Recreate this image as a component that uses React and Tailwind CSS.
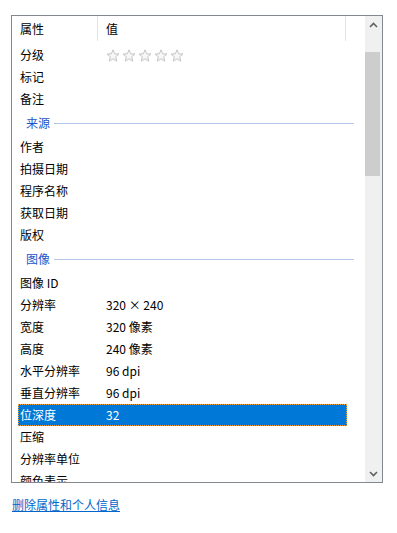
import React from 'react';

const font = { fontFamily: '"Noto Sans CJK SC", "Noto Sans", sans-serif' };

const Star = () => (
  <svg width="14" height="13" viewBox="0 0 14 13">
    <polygon
      points="7,0.8 8.7,4.8 13,5 9.6,7.8 10.8,12.2 7,9.8 3.2,12.2 4.4,7.8 1,5 5.3,4.8"
      fill="#f7f7f7"
      stroke="#c4c4c4"
      strokeWidth="1"
      strokeLinejoin="round"
    />
  </svg>
);

const Row = ({ name, value, selected, children }) => (
  <div className="h-[22px] pl-[6px] flex">
    <div
      className={
        selected
          ? 'w-[329px] flex items-center bg-[#0078d7] text-white border border-dotted border-[#f0a040]'
          : 'w-[329px] flex items-center border border-transparent'
      }
    >
      <div className="w-[79px] pl-[1px] shrink-0">{name}</div>
      <div className="pl-[8px] flex items-center gap-[2px]">{children || value}</div>
    </div>
  </div>
);

const Group = ({ title }) => (
  <div className="h-[26px] flex items-center pl-[14px] pr-[11px]">
    <span className="text-[#1d55c9]">{title}</span>
    <div className="flex-1 h-px bg-[#b4c6e6] ml-[4px]" />
  </div>
);

const Chevron = ({ down }) => (
  <svg width="9" height="6" viewBox="0 0 9 6">
    <polyline
      points={down ? '1,1 4.5,4.5 8,1' : '1,5 4.5,1.5 8,5'}
      fill="none"
      stroke="#606060"
      strokeWidth="1.6"
    />
  </svg>
);

export default function App() {
  return (
    <div className="w-[397px] h-[533px] bg-white text-[12px] text-black leading-none" style={font}>
      <div className="pt-[15px] pl-[11px]">
        <div className="w-[372px] h-[468px] border border-[#828790] flex overflow-hidden">
          <div className="flex-1 overflow-hidden">
            {/* header */}
            <div className="h-[28px] flex">
              <div className="w-[86px] pl-[8px] pt-[7px] border-r border-[#e5e5e5] h-[25px]">属性</div>
              <div className="w-[248px] pl-[8px] pt-[7px] border-r border-[#e5e5e5] h-[25px]">值</div>
            </div>
            <Row name="分级">
              <Star />
              <Star />
              <Star />
              <Star />
              <Star />
            </Row>
            <Row name="标记" />
            <Row name="备注" />
            <Group title="来源" />
            <Row name="作者" />
            <Row name="拍摄日期" />
            <Row name="程序名称" />
            <Row name="获取日期" />
            <Row name="版权" />
            <Group title="图像" />
            <Row name="图像 ID" />
            <Row name="分辨率" value="320 × 240" />
            <Row name="宽度" value="320 像素" />
            <Row name="高度" value="240 像素" />
            <Row name="水平分辨率" value="96 dpi" />
            <Row name="垂直分辨率" value="96 dpi" />
            <Row name="位深度" value="32" selected />
            <Row name="压缩" />
            <Row name="分辨率单位" />
            <Row name="颜色表示" />
          </div>
          {/* scrollbar */}
          <div className="w-[17px] bg-[#f0f0f0] flex flex-col">
            <div className="h-[17px] flex items-center justify-center">
              <Chevron />
            </div>
            <div className="h-[19px]" />
            <div className="h-[124px] w-[15px] bg-[#cdcdcd]" />
            <div className="flex-1" />
            <div className="h-[17px] flex items-center justify-center">
              <Chevron down />
            </div>
          </div>
        </div>
      </div>
      <div className="pl-[12px] pt-[16px]">
        <a className="text-[#0066cc] underline">删除属性和个人信息</a>
      </div>
    </div>
  );
}
